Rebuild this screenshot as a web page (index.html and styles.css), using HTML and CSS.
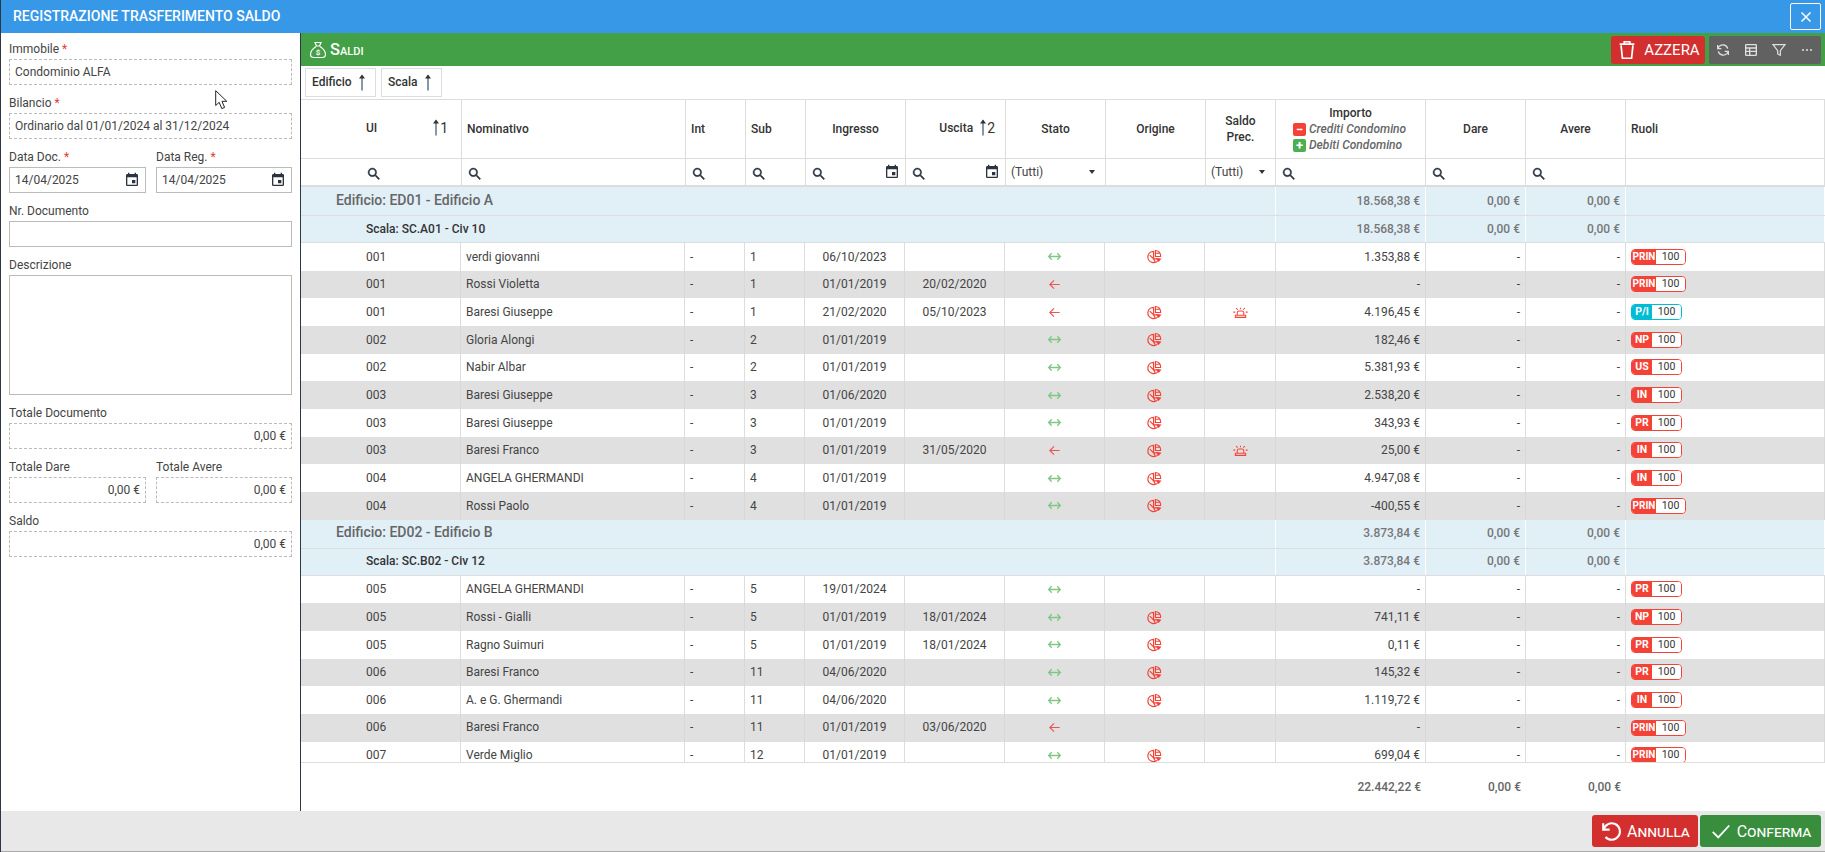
FILE: index.html
```html
<!DOCTYPE html>
<html lang="it">
<head>
<meta charset="utf-8">
<title>Registrazione trasferimento saldo</title>
<link rel="stylesheet" href="styles.css">
</head>
<body>
<svg class="defs" width="0" height="0">
  <symbol id="i-search" viewBox="0 0 24 24"><path d="M9.5,3A6.5,6.5 0 0,1 16,9.5C16,11.11 15.41,12.59 14.44,13.73L14.71,14H15.5L20.5,19L19,20.5L14,15.5V14.71L13.73,14.44C12.59,15.41 11.11,16 9.5,16A6.5,6.5 0 0,1 3,9.5A6.5,6.5 0 0,1 9.5,3M9.5,5C7,5 5,7 5,9.5C5,12 7,14 9.5,14C12,14 14,12 14,9.5C14,7 12,5 9.5,5Z"/></symbol>
  <symbol id="i-cal" viewBox="0 0 24 24"><path d="M19 19H5V8h14M19 3h-1V1h-2v2H8V1H6v2H5C3.89 3 3 3.9 3 5v14a2 2 0 0 0 2 2h14a2 2 0 0 0 2-2V5a2 2 0 0 0-2-2M12 12h5v5h-5z"/></symbol>
  <symbol id="i-sort" viewBox="0 0 8 18"><path d="M4 1.5V16.5" fill="none" stroke="#44607c" stroke-width="1.3"/><path d="M4 .5L7 4.5H1Z" fill="#333"/></symbol>
  <symbol id="i-both" viewBox="0 0 16 16"><path d="M2 8H14M5 4.5L1.8 8L5 11.5M11 4.5L14.2 8L11 11.5" fill="none" stroke="#81c784" stroke-width="1.4"/></symbol>
  <symbol id="i-left" viewBox="0 0 16 16"><path d="M3 8H13.5M7.5 3.5L3 8L7.5 12.5" fill="none" stroke="#ef5350" stroke-width="1.2"/></symbol>
  <symbol id="i-pie" viewBox="0 0 16 16"><path d="M7 2.5A6 6 0 1 0 12.6 10.5H7ZM7 10.5L3 6.5M7 10.5L9 14.5" fill="none" stroke="#f44336" stroke-width="1.3"/><path d="M9 1.6V8H14.5V7A5.5 5.5 0 0 0 9 1.6ZM9 4.5H13" fill="none" stroke="#f44336" stroke-width="1.2"/><path d="M9.5 10H15.5L12.5 13.8Z" fill="#f44336"/></symbol>
  <symbol id="i-siren" viewBox="0 0 16 16"><path d="M4.5 11V8.5Q4.5 6.5 6.5 6.5H9.5Q11.5 6.5 11.5 8.5V11M2.5 11H13.5V13.2H2.5ZM8 3V4.6M3.4 3.4L4.9 4.9M12.6 3.4L11.1 4.9M.4 7.6H2.4M13.6 7.6H15.6" fill="none" stroke="#f44336" stroke-width="1.1"/></symbol>
</svg>

<div class="window">
  <header class="titlebar">
    <h1 class="title">REGISTRAZIONE TRASFERIMENTO SALDO</h1>
    <button class="close" type="button" aria-label="Chiudi"><svg viewBox="0 0 24 24" width="18" height="18"><path d="M6 6L18 18M18 6L6 18" fill="none" stroke="#fff" stroke-width="2"/></svg></button>
  </header>

  <main class="main">
    <aside class="form">
      <div class="field"><label class="lbl">Immobile <em>*</em></label><div class="box dash">Condominio ALFA</div></div>
      <div class="field"><label class="lbl">Bilancio <em>*</em></label><div class="box dash">Ordinario dal 01/01/2024 al 31/12/2024</div></div>
      <div class="two">
        <div class="field"><label class="lbl">Data Doc. <em>*</em></label><div class="box solid between">14/04/2025<svg class="ic16"><use href="#i-cal"/></svg></div></div>
        <div class="field"><label class="lbl">Data Reg. <em>*</em></label><div class="box solid between">14/04/2025<svg class="ic16"><use href="#i-cal"/></svg></div></div>
      </div>
      <div class="field"><label class="lbl">Nr. Documento</label><div class="box solid"></div></div>
      <div class="field"><label class="lbl">Descrizione</label><div class="box solid tall"></div></div>
      <div class="field"><label class="lbl">Totale Documento</label><div class="box dash end">0,00 €</div></div>
      <div class="two">
        <div class="field"><label class="lbl">Totale Dare</label><div class="box dash end">0,00 €</div></div>
        <div class="field"><label class="lbl">Totale Avere</label><div class="box dash end">0,00 €</div></div>
      </div>
      <div class="field"><label class="lbl">Saldo</label><div class="box dash end">0,00 €</div></div>
    </aside>

    <section class="content">
      <div class="greenbar">
        <svg class="bag" viewBox="0 0 18 18" width="18" height="18"><path d="M6 1.5H12L10.5 5H7.5ZM7 5H11M7 5.5C4 7.5 1.5 11 1.5 13.5C1.5 15.5 3 16.5 5 16.5H13C15 16.5 16.5 15.5 16.5 13.5C16.5 11 14 7.5 11 5.5" fill="none" stroke="#fff" stroke-width="1.2"/><text x="9" y="14" text-anchor="middle" class="bagtxt">$</text></svg>
        <span class="saldi">Saldi</span>
        <div class="spacer"></div>
        <button class="azzera" type="button">
          <svg viewBox="0 0 24 24" width="22" height="22"><path d="M5.5 7L7 21H17L18.5 7M4 5.5H20M9 5.5V3H15V5.5" fill="none" stroke="#fff" stroke-width="1.9"/></svg>
          AZZERA
        </button>
        <div class="tools">
          <svg viewBox="0 0 24 24" width="16" height="16"><path d="M19 10A7.5 7.5 0 0 0 6 7L4 9.5M5 14A7.5 7.5 0 0 0 18 17L20 14.5M4 4.5V10H9.5M20 19.5V14H14.5" fill="none" stroke="#ddd" stroke-width="2"/></svg>
          <svg viewBox="0 0 24 24" width="16" height="16"><path d="M5 3H19A2 2 0 0 1 21 5V19A2 2 0 0 1 19 21H5A2 2 0 0 1 3 19V5A2 2 0 0 1 5 3ZM5 5V8H19V5ZM5 10V13H9V10ZM11 10V13H19V10ZM5 15V19H9V15ZM11 15V19H19V15Z" fill="#e0e0e0"/></svg>
          <svg viewBox="0 0 24 24" width="16" height="16"><path d="M3 4H21L14 13V20L10 18V13Z" fill="none" stroke="#e0e0e0" stroke-width="1.8"/></svg>
          <svg viewBox="0 0 24 24" width="16" height="16"><circle cx="6" cy="12" r="1.5" fill="#e0e0e0"/><circle cx="12" cy="12" r="1.5" fill="#e0e0e0"/><circle cx="18" cy="12" r="1.5" fill="#e0e0e0"/></svg>
        </div>
      </div>

      <div class="groupbar">
        <span class="gchip">Edificio<svg class="sort"><use href="#i-sort"/></svg></span>
        <span class="gchip">Scala<svg class="sort"><use href="#i-sort"/></svg></span>
      </div>

      <div class="row head">
        <div class="h h-ui"><span>UI</span><span class="ord"><svg class="sort"><use href="#i-sort"/></svg>1</span></div>
        <div class="h left">Nominativo</div>
        <div class="h left">Int</div>
        <div class="h left">Sub</div>
        <div class="h">Ingresso</div>
        <div class="h h-out"><span>Uscita</span><span class="ord"><svg class="sort"><use href="#i-sort"/></svg>2</span></div>
        <div class="h">Stato</div>
        <div class="h">Origine</div>
        <div class="h">Saldo<br>Prec.</div>
        <div class="h col">
          <span>Importo</span>
          <span class="leg"><i class="sq neg">−</i>Crediti Condomino</span>
          <span class="leg"><i class="sq pos">+</i>Debiti Condomino</span>
        </div>
        <div class="h">Dare</div>
        <div class="h">Avere</div>
        <div class="h left">Ruoli</div>
      </div>

      <div class="row filter">
        <div class="f f-ui"><svg class="ic16 mag"><use href="#i-search"/></svg></div>
        <div class="f"><svg class="ic16 mag"><use href="#i-search"/></svg></div>
        <div class="f"><svg class="ic16 mag"><use href="#i-search"/></svg></div>
        <div class="f"><svg class="ic16 mag"><use href="#i-search"/></svg></div>
        <div class="f between"><svg class="ic16 mag"><use href="#i-search"/></svg><svg class="ic16"><use href="#i-cal"/></svg></div>
        <div class="f between"><svg class="ic16 mag"><use href="#i-search"/></svg><svg class="ic16"><use href="#i-cal"/></svg></div>
        <div class="f between">(Tutti)<i class="caret"></i></div>
        <div class="f"></div>
        <div class="f between">(Tutti)<i class="caret"></i></div>
        <div class="f"><svg class="ic16 mag"><use href="#i-search"/></svg></div>
        <div class="f"><svg class="ic16 mag"><use href="#i-search"/></svg></div>
        <div class="f"><svg class="ic16 mag"><use href="#i-search"/></svg></div>
        <div class="f"></div>
      </div>

      <div class="body">
        <div class="grp g1"><div class="gl">Edificio: ED01 - Edificio A</div><div class="gv">18.568,38 €</div><div class="gv">0,00 €</div><div class="gv">0,00 €</div><div class="gv"></div></div>
        <div class="grp g2"><div class="gl">Scala: SC.A01 - Civ 10</div><div class="gv">18.568,38 €</div><div class="gv">0,00 €</div><div class="gv">0,00 €</div><div class="gv"></div></div>

        <div class="row data"><div class="c ui">001</div><div class="c">verdi giovanni</div><div class="c">-</div><div class="c">1</div><div class="c m">06/10/2023</div><div class="c m"></div><div class="c m"><svg class="ic15"><use href="#i-both"/></svg></div><div class="c m"><svg class="ic15"><use href="#i-pie"/></svg></div><div class="c m"></div><div class="c r">1.353,88 €</div><div class="c r">-</div><div class="c r">-</div><div class="c"><span class="chip red"><b class="w">PRIN</b><i>100</i></span></div></div>
        <div class="row data alt"><div class="c ui">001</div><div class="c">Rossi Violetta</div><div class="c">-</div><div class="c">1</div><div class="c m">01/01/2019</div><div class="c m">20/02/2020</div><div class="c m"><svg class="ic15"><use href="#i-left"/></svg></div><div class="c m"></div><div class="c m"></div><div class="c r">-</div><div class="c r">-</div><div class="c r">-</div><div class="c"><span class="chip red"><b class="w">PRIN</b><i>100</i></span></div></div>
        <div class="row data"><div class="c ui">001</div><div class="c">Baresi Giuseppe</div><div class="c">-</div><div class="c">1</div><div class="c m">21/02/2020</div><div class="c m">05/10/2023</div><div class="c m"><svg class="ic15"><use href="#i-left"/></svg></div><div class="c m"><svg class="ic15"><use href="#i-pie"/></svg></div><div class="c m"><svg class="ic15"><use href="#i-siren"/></svg></div><div class="c r">4.196,45 €</div><div class="c r">-</div><div class="c r">-</div><div class="c"><span class="chip cyan"><b>P/I</b><i>100</i></span></div></div>
        <div class="row data alt"><div class="c ui">002</div><div class="c">Gloria Alongi</div><div class="c">-</div><div class="c">2</div><div class="c m">01/01/2019</div><div class="c m"></div><div class="c m"><svg class="ic15"><use href="#i-both"/></svg></div><div class="c m"><svg class="ic15"><use href="#i-pie"/></svg></div><div class="c m"></div><div class="c r">182,46 €</div><div class="c r">-</div><div class="c r">-</div><div class="c"><span class="chip red"><b>NP</b><i>100</i></span></div></div>
        <div class="row data"><div class="c ui">002</div><div class="c">Nabir Albar</div><div class="c">-</div><div class="c">2</div><div class="c m">01/01/2019</div><div class="c m"></div><div class="c m"><svg class="ic15"><use href="#i-both"/></svg></div><div class="c m"><svg class="ic15"><use href="#i-pie"/></svg></div><div class="c m"></div><div class="c r">5.381,93 €</div><div class="c r">-</div><div class="c r">-</div><div class="c"><span class="chip red"><b>US</b><i>100</i></span></div></div>
        <div class="row data alt"><div class="c ui">003</div><div class="c">Baresi Giuseppe</div><div class="c">-</div><div class="c">3</div><div class="c m">01/06/2020</div><div class="c m"></div><div class="c m"><svg class="ic15"><use href="#i-both"/></svg></div><div class="c m"><svg class="ic15"><use href="#i-pie"/></svg></div><div class="c m"></div><div class="c r">2.538,20 €</div><div class="c r">-</div><div class="c r">-</div><div class="c"><span class="chip red"><b>IN</b><i>100</i></span></div></div>
        <div class="row data"><div class="c ui">003</div><div class="c">Baresi Giuseppe</div><div class="c">-</div><div class="c">3</div><div class="c m">01/01/2019</div><div class="c m"></div><div class="c m"><svg class="ic15"><use href="#i-both"/></svg></div><div class="c m"><svg class="ic15"><use href="#i-pie"/></svg></div><div class="c m"></div><div class="c r">343,93 €</div><div class="c r">-</div><div class="c r">-</div><div class="c"><span class="chip red"><b>PR</b><i>100</i></span></div></div>
        <div class="row data alt"><div class="c ui">003</div><div class="c">Baresi Franco</div><div class="c">-</div><div class="c">3</div><div class="c m">01/01/2019</div><div class="c m">31/05/2020</div><div class="c m"><svg class="ic15"><use href="#i-left"/></svg></div><div class="c m"><svg class="ic15"><use href="#i-pie"/></svg></div><div class="c m"><svg class="ic15"><use href="#i-siren"/></svg></div><div class="c r">25,00 €</div><div class="c r">-</div><div class="c r">-</div><div class="c"><span class="chip red"><b>IN</b><i>100</i></span></div></div>
        <div class="row data"><div class="c ui">004</div><div class="c">ANGELA GHERMANDI</div><div class="c">-</div><div class="c">4</div><div class="c m">01/01/2019</div><div class="c m"></div><div class="c m"><svg class="ic15"><use href="#i-both"/></svg></div><div class="c m"><svg class="ic15"><use href="#i-pie"/></svg></div><div class="c m"></div><div class="c r">4.947,08 €</div><div class="c r">-</div><div class="c r">-</div><div class="c"><span class="chip red"><b>IN</b><i>100</i></span></div></div>
        <div class="row data alt"><div class="c ui">004</div><div class="c">Rossi Paolo</div><div class="c">-</div><div class="c">4</div><div class="c m">01/01/2019</div><div class="c m"></div><div class="c m"><svg class="ic15"><use href="#i-both"/></svg></div><div class="c m"><svg class="ic15"><use href="#i-pie"/></svg></div><div class="c m"></div><div class="c r">-400,55 €</div><div class="c r">-</div><div class="c r">-</div><div class="c"><span class="chip red"><b class="w">PRIN</b><i>100</i></span></div></div>

        <div class="grp g1"><div class="gl">Edificio: ED02 - Edificio B</div><div class="gv">3.873,84 €</div><div class="gv">0,00 €</div><div class="gv">0,00 €</div><div class="gv"></div></div>
        <div class="grp g2"><div class="gl">Scala: SC.B02 - Civ 12</div><div class="gv">3.873,84 €</div><div class="gv">0,00 €</div><div class="gv">0,00 €</div><div class="gv"></div></div>

        <div class="row data"><div class="c ui">005</div><div class="c">ANGELA GHERMANDI</div><div class="c">-</div><div class="c">5</div><div class="c m">19/01/2024</div><div class="c m"></div><div class="c m"><svg class="ic15"><use href="#i-both"/></svg></div><div class="c m"></div><div class="c m"></div><div class="c r">-</div><div class="c r">-</div><div class="c r">-</div><div class="c"><span class="chip red"><b>PR</b><i>100</i></span></div></div>
        <div class="row data alt"><div class="c ui">005</div><div class="c">Rossi - Gialli</div><div class="c">-</div><div class="c">5</div><div class="c m">01/01/2019</div><div class="c m">18/01/2024</div><div class="c m"><svg class="ic15"><use href="#i-both"/></svg></div><div class="c m"><svg class="ic15"><use href="#i-pie"/></svg></div><div class="c m"></div><div class="c r">741,11 €</div><div class="c r">-</div><div class="c r">-</div><div class="c"><span class="chip red"><b>NP</b><i>100</i></span></div></div>
        <div class="row data"><div class="c ui">005</div><div class="c">Ragno Suimuri</div><div class="c">-</div><div class="c">5</div><div class="c m">01/01/2019</div><div class="c m">18/01/2024</div><div class="c m"><svg class="ic15"><use href="#i-both"/></svg></div><div class="c m"><svg class="ic15"><use href="#i-pie"/></svg></div><div class="c m"></div><div class="c r">0,11 €</div><div class="c r">-</div><div class="c r">-</div><div class="c"><span class="chip red"><b>PR</b><i>100</i></span></div></div>
        <div class="row data alt"><div class="c ui">006</div><div class="c">Baresi Franco</div><div class="c">-</div><div class="c">11</div><div class="c m">04/06/2020</div><div class="c m"></div><div class="c m"><svg class="ic15"><use href="#i-both"/></svg></div><div class="c m"><svg class="ic15"><use href="#i-pie"/></svg></div><div class="c m"></div><div class="c r">145,32 €</div><div class="c r">-</div><div class="c r">-</div><div class="c"><span class="chip red"><b>PR</b><i>100</i></span></div></div>
        <div class="row data"><div class="c ui">006</div><div class="c">A. e G. Ghermandi</div><div class="c">-</div><div class="c">11</div><div class="c m">04/06/2020</div><div class="c m"></div><div class="c m"><svg class="ic15"><use href="#i-both"/></svg></div><div class="c m"><svg class="ic15"><use href="#i-pie"/></svg></div><div class="c m"></div><div class="c r">1.119,72 €</div><div class="c r">-</div><div class="c r">-</div><div class="c"><span class="chip red"><b>IN</b><i>100</i></span></div></div>
        <div class="row data alt"><div class="c ui">006</div><div class="c">Baresi Franco</div><div class="c">-</div><div class="c">11</div><div class="c m">01/01/2019</div><div class="c m">03/06/2020</div><div class="c m"><svg class="ic15"><use href="#i-left"/></svg></div><div class="c m"></div><div class="c m"></div><div class="c r">-</div><div class="c r">-</div><div class="c r">-</div><div class="c"><span class="chip red"><b class="w">PRIN</b><i>100</i></span></div></div>
        <div class="row data"><div class="c ui">007</div><div class="c">Verde Miglio</div><div class="c">-</div><div class="c">12</div><div class="c m">01/01/2019</div><div class="c m"></div><div class="c m"><svg class="ic15"><use href="#i-both"/></svg></div><div class="c m"><svg class="ic15"><use href="#i-pie"/></svg></div><div class="c m"></div><div class="c r">699,04 €</div><div class="c r">-</div><div class="c r">-</div><div class="c"><span class="chip red"><b class="w">PRIN</b><i>100</i></span></div></div>
      </div>

      <div class="totals">
        <div class="t">22.442,22 €</div><div class="t">0,00 €</div><div class="t">0,00 €</div><div></div>
      </div>
    </section>
  </main>

  <footer class="footer">
    <button class="btn undo" type="button"><svg viewBox="0 0 24 24" width="22" height="22"><path d="M3.5 3.5V10.5H10.5M4 10.5A9 9 0 1 1 6 18.5" fill="none" stroke="#fff" stroke-width="2.3"/></svg>Annulla</button>
    <button class="btn ok" type="button"><svg viewBox="0 0 24 24" width="22" height="22"><path d="M3 13L9 19L21 6" fill="none" stroke="#fff" stroke-width="2"/></svg>Conferma</button>
  </footer>

  <svg class="cursor" viewBox="0 0 13 20" width="13" height="20"><path d="M.7.7V15.5L4.2 12.3L6.8 18.6L9.6 17.4L7 11.3H11.8Z" fill="#fff" stroke="#222" stroke-width="1"/></svg>
</div>
</body>
</html>
```

FILE: styles.css
```css
* { box-sizing: border-box; }
html, body { margin: 0; height: 100%; }
body { font: 12px/1.2 Roboto, "Liberation Sans", sans-serif; color: #444; background: #fff; overflow: hidden; }
.defs { position: absolute; }
.ic16 { width: 16px; height: 16px; fill: #2b3440; flex: none; display: block; }
.mag { stroke: #2b3440; stroke-width: .6; margin-top: 3px; }
.ic15 { width: 15px; height: 15px; display: block; }
.sort { width: 8px; height: 18px; display: block; flex: none; }

.window { position: relative; display: flex; flex-direction: column; height: 852px; border-left: 1px solid #2f3644; }
.titlebar { flex: none; height: 33px; background: #3898e8; display: flex; align-items: center; justify-content: space-between; padding: 0 4px 0 12px; }
.title { margin: 0; font-size: 14px; font-weight: 500; color: #fff; }
.close { width: 31px; height: 27px; padding: 0; background: transparent; border: 1px solid #fff; border-radius: 2px; display: flex; align-items: center; justify-content: center; }

.main { flex: none; height: 778px; display: flex; }
.form { flex: none; width: 300px; border-right: 1px solid #2f3644; padding: 6px 8px 0; display: flex; flex-direction: column; gap: 8px; }
.field { display: flex; flex-direction: column; min-width: 0; }
.lbl { height: 20px; line-height: 20px; color: #444; font-size: 12px; }
.lbl em { color: #e53935; font-style: normal; }
.box { height: 26px; display: flex; align-items: center; padding: 0 5px; font-size: 12px; color: #444; border: 1px solid #bbb; }
.dash { border-style: dashed; }
.solid { border-style: solid; }
.tall { height: 120px; }
.between { justify-content: space-between; }
.end { justify-content: flex-end; }
.two { display: grid; grid-template-columns: 137px 136px; gap: 10px; }

.content { flex: 1; min-width: 0; display: flex; flex-direction: column; }
.greenbar { flex: none; height: 33px; background: #43a047; display: flex; align-items: center; padding: 0 4px 0 8px; }
.bag { margin-right: 3px; }
.bagtxt { font-size: 8px; font-weight: 700; fill: #fff; }
.saldi { display: inline-block; text-transform: uppercase; font-size: 11px; font-weight: 500; color: #fff; }
.saldi::first-letter { font-size: 16.5px; }
.spacer { flex: 1; }
.azzera { width: 94px; height: 28px; padding: 0; margin-right: 4px; background: #d32f2f; border: 0; border-radius: 3px; color: #fff; font: 15px Roboto, sans-serif; display: flex; align-items: center; justify-content: center; gap: 6px; }
.tools { width: 112px; height: 28px; background: #616161; border-radius: 2px; display: flex; align-items: center; justify-content: space-between; padding: 0 6px; }

.groupbar { flex: none; height: 33px; display: flex; align-items: center; gap: 5px; padding: 0 4px; }
.gchip { height: 29px; border: 1px solid #ddd; display: flex; align-items: center; justify-content: space-between; font-weight: 500; color: #333; padding: 0 9px 0 6px; }
.gchip:first-child { width: 71px; }
.gchip:last-child { width: 61px; }

.row { display: grid; }
.head, .filter { grid-template-columns: 161px 224px 60px 60px 100px 100px 100px 100px 70px 150px 100px 100px 1fr; flex: none; }
.head { height: 60px; border-top: 1px solid #ddd; }
.h { border-right: 1px solid #ddd; border-bottom: 1px solid #ddd; display: flex; align-items: center; justify-content: center; text-align: center; font-weight: 500; color: #333; line-height: 16px; }
.left { justify-content: flex-start; padding-left: 5px; }
.h-ui { justify-content: space-between; padding: 0 13px 2px 65px; }
.h-out { justify-content: flex-end; gap: 6px; padding: 0 10px 2px 0; }
.ord { display: flex; align-items: center; font-size: 14px; font-weight: 400; }
.col { flex-direction: column; }
.leg { align-self: flex-start; margin-left: 17px; font-style: italic; font-weight: 500; color: #666; display: flex; align-items: center; gap: 3px; line-height: 16px; }
.sq { width: 13px; height: 13px; border-radius: 2px; color: #fff; font: 700 13px/13px Roboto, sans-serif; text-align: center; }
.neg { background: #f44336; }
.pos { background: #4caf50; }

.filter { height: 28px; border-bottom: 2px solid #ddd; }
.f { border-right: 1px solid #ddd; display: flex; align-items: center; padding: 0 5px; color: #444; }
.f-ui { padding-left: 65px; }
.caret { width: 0; height: 0; border: 3.5px solid transparent; border-top: 4px solid #333; border-bottom: 0; margin-right: 5px; }

.body { flex: 1; min-height: 0; overflow: hidden; }
.grp { display: grid; grid-template-columns: 975px 150px 100px 100px 1fr; background: #e1eff7; border-bottom: 1px solid #ddd; }
.g1 { height: 29px; }
.g2 { height: 27px; }
.gl { display: flex; align-items: center; border-right: 1px solid #fff; }
.g1 .gl { padding: 0 0 2px 35px; font-size: 14px; font-weight: 500; color: #666; }
.g2 .gl { padding-left: 65px; font-weight: 500; color: #333; }
.gv { display: flex; align-items: center; justify-content: flex-end; padding-right: 5px; font-weight: 500; color: #777; border-right: 1px solid #fff; }

.data { grid-template-columns: 160px 224px 60px 60px 100px 100px 100px 100px 71px 150px 100px 100px 1fr; height: 27.67px; }
.alt { background: #e0e0e0; }
.c { display: flex; align-items: center; padding-left: 5px; border-right: 1px solid #ddd; min-width: 0; }
.alt .c { border-right-color: #d8d8d8; }
.ui { padding-left: 65px; }
.m { justify-content: center; padding: 0; }
.r { justify-content: flex-end; padding: 0 5px 0 0; }

.chip { display: inline-flex; height: 16px; border: 1px solid currentColor; border-radius: 4px; overflow: hidden; font-size: 11px; line-height: 14px; }
.chip b { width: 20px; text-align: center; color: #fff; font-weight: 700; font-size: 10.5px; white-space: nowrap; }
.chip b.w { width: 24px; font-size: 10px; }
.chip i { width: 29px; background: #fff; color: #333; font-style: normal; text-align: center; font-size: 10.5px; }
.red { color: #f44336; }
.red b { background: #f44336; }
.cyan { color: #00bcd4; }
.cyan b { background: #00bcd4; }

.totals { flex: none; height: 49px; border-top: 1px solid #ddd; display: grid; grid-template-columns: 1125px 100px 100px 1fr; }
.t { display: flex; align-items: center; justify-content: flex-end; padding: 0 5px 0 0; font-weight: 500; color: #666; }

.footer { flex: none; height: 41px; background: #e8e8e8; border-bottom: 1px solid #aaa; display: flex; justify-content: flex-end; align-items: center; gap: 2px; padding: 0 4px 0 0; }
.btn { height: 32px; padding: 0; border: 0; border-radius: 3px; color: #fff; font: 16px Roboto, sans-serif; font-variant: small-caps; display: flex; align-items: center; justify-content: center; gap: 5px; }
.undo { width: 106px; background: #d32f2f; }
.ok { width: 121px; background: #388e3c; }

.cursor { position: absolute; left: 214px; top: 90px; }
```
